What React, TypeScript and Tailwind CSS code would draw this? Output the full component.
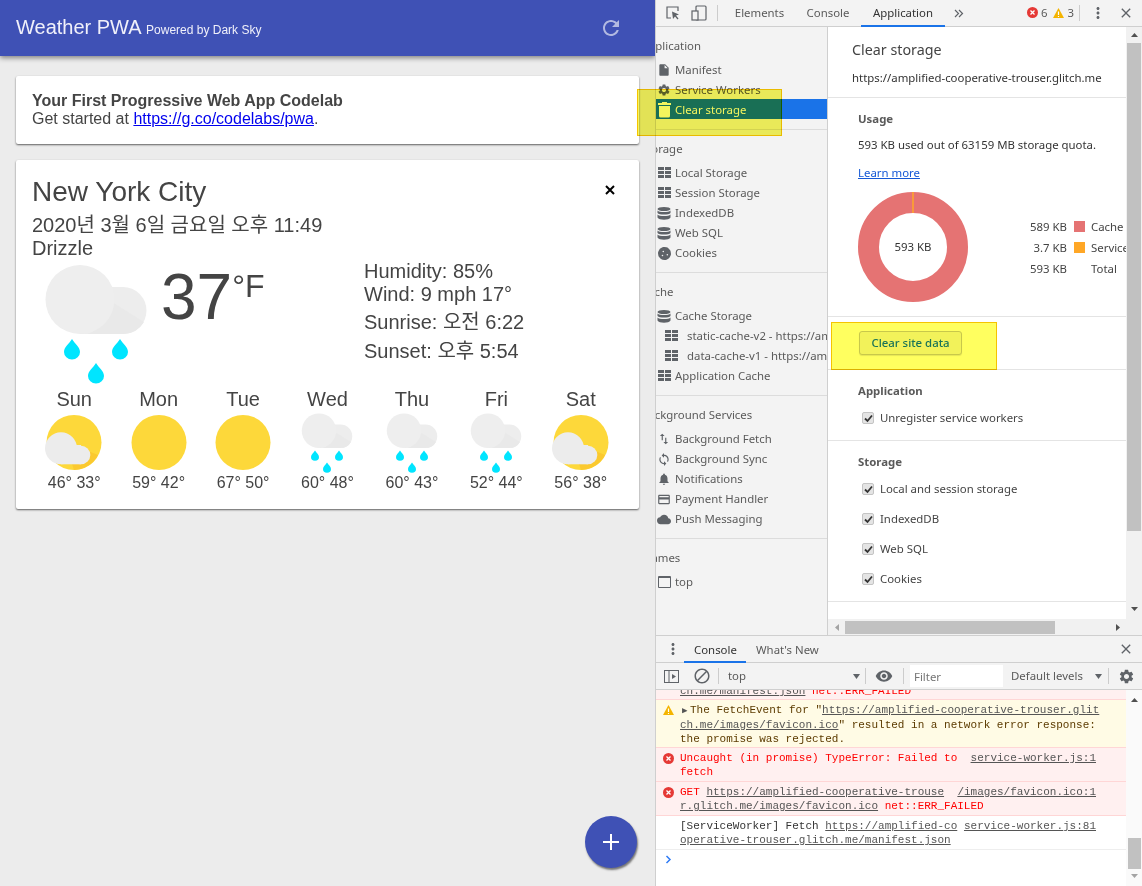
import React from "react";
import {
  MdInsertDriveFile,
  MdSettings,
  MdSwapVert,
  MdSync,
  MdNotifications,
  MdCreditCard,
  MdCloud,
  MdBlock,
  MdVisibility,
  MdMoreVert,
  MdClose,
} from "react-icons/md";
import { FaCookie } from "react-icons/fa";

function Drop({ x, y }: { x: number; y: number }) {
  return (
    <path
      d={`M${x} ${y - 10}C${x + 3} ${y - 5} ${x + 8} ${y - 2} ${x + 8} ${y + 3}A8 7.5 0 0 1 ${x - 8} ${y + 3}C${x - 8} ${y - 2} ${x - 3} ${y - 5} ${x} ${y - 10}Z`}
      fill="#00e5ff"
    />
  );
}

function RainIcon({ size }: { size: number }) {
  const box = size === 128 ? "0 4 128 124" : "0 0 128 128";
  return (
    <svg width={size} height={size === 128 ? 124 : 64} viewBox={box} className="shrink-0">
      <path d="M48 31H91a23.5 23.5 0 0 1 0 47H48Z" fill="#ededed" />
      <path d="M72 41L112 66a23.5 23.5 0 0 1-21 12H56C70 72 78 58 72 41Z" fill="#e9e9e9" />
      <circle cx="48" cy="43.500" r="34.500" fill="#eeeeee" />
      <Drop x={40} y={93} />
      <Drop x={88} y={93} />
      <Drop x={64} y={117} />
    </svg>
  );
}

function SunIcon({ cloud }: { cloud?: boolean }) {
  return (
    <svg width="64" height="64" viewBox="0 0 64 64" className="shrink-0">
      <circle cx="32" cy="33.500" r="27.500" fill="#fdd83a" />
      {cloud && (
        <>
          <path d="M30 55L46 42L56 46A27.500 27.500 0 0 1 32 61Z" fill="#fbc92f" />
          <circle cx="19" cy="39.300" r="16" fill="#ececec" />
          <circle cx="39" cy="46" r="9.300" fill="#ececec" />
          <path d="M19 36H39V55.300H19Z" fill="#ececec" />
        </>
      )}
    </svg>
  );
}

const forecast = [
  { day: "Sun", icon: "partly", temp: "46° 33°" },
  { day: "Mon", icon: "sun", temp: "59° 42°" },
  { day: "Tue", icon: "sun", temp: "67° 50°" },
  { day: "Wed", icon: "rain", temp: "60° 48°" },
  { day: "Thu", icon: "rain", temp: "60° 43°" },
  { day: "Fri", icon: "rain", temp: "52° 44°" },
  { day: "Sat", icon: "partly", temp: "56° 38°" },
];

function WeatherApp() {
  return (
    <div className="w-[655px] shrink-0 bg-[#ececec] relative overflow-hidden font-['Liberation_Sans','Noto_Sans_CJK_KR',sans-serif] text-[#444]">
      <div className="h-14 bg-[#3f51b5] flex items-center justify-between pl-4 pr-[32px] shadow-[0_2px_5px_rgba(0,0,0,0.45)]">
        <p className="text-[20px] text-[#f0f0fa] leading-none mb-[2px]">
          Weather PWA <span className="text-[12px]">Powered by Dark Sky</span>
        </p>
        <svg width="24" height="24" viewBox="0 0 24 24" fill="#ffffff" fillOpacity="0.6">
          <path d="M17.65 6.35C16.2 4.9 14.21 4 12 4c-4.42 0-7.99 3.58-7.99 8s3.57 8 7.99 8c3.73 0 6.84-2.55 7.73-6h-2.08c-.82 2.33-3.04 4-5.65 4-3.31 0-6-2.69-6-6s2.69-6 6-6c1.66 0 3.14.69 4.22 1.78L13 11h7V4l-2.35 2.35z" />
        </svg>
      </div>

      <div className="ml-4 mr-4 mt-5 bg-white rounded-[2px] p-4 h-[68px] text-[16px] leading-[18px] shadow-[0_1px_2px_rgba(0,0,0,0.6)]">
        <p className="font-bold">Your First Progressive Web App Codelab</p>
        <p>
          Get started at <a className="text-[#0000ee] underline">https://g.co/codelabs/pwa</a>.
        </p>
      </div>

      <div className="ml-4 mr-4 mt-4 bg-white rounded-[2px] px-4 pt-4 pb-[17px] shadow-[0_1px_2px_rgba(0,0,0,0.6)]">
        <div className="flex justify-between h-[31px]">
          <p className="text-[28px] leading-[31px]">New York City</p>
          <svg width="18" height="18" viewBox="0 0 18 18" className="mt-[5px] mr-[4px]" stroke="#000" strokeWidth="2">
            <path d="M5 5l8 8M13 5l-8 8" />
          </svg>
        </div>
        <p className="text-[20px] leading-[29px] mt-[4px]">2020년 3월 6일 금요일 오후 11:49</p>
        <p className="text-[20px] leading-[21px] -mt-[2px] mb-[1px]">Drizzle</p>
        <div className="flex h-[128px]">
          <RainIcon size={128} />
          <div className="flex w-[203px] items-start ml-[1px]">
            <span className="text-[64px] leading-[74px]">37</span>
            <span className="text-[32px] leading-[37px] mt-2">°F</span>
          </div>
          <div className="text-[20px]">
            <p className="leading-[23px]">Humidity: 85%</p>
            <p className="leading-[23px]">Wind: 9 mph 17°</p>
            <p className="leading-[29px] mt-[2px]">Sunrise: 오전 6:22</p>
            <p className="leading-[29px]">Sunset: 오후 5:54</p>
          </div>
        </div>
        <div className="grid grid-cols-7">
          {forecast.map((f) => (
            <div key={f.day} className="flex flex-col items-center">
              <p className="text-[20px] h-[21px] leading-[23px]">{f.day}</p>
              {f.icon === "rain" ? <RainIcon size={64} /> : <SunIcon cloud={f.icon === "partly"} />}
              <p className="text-[16px] leading-[18px] mt-[1px]">{f.temp}</p>
            </div>
          ))}
        </div>
      </div>

      <div className="absolute left-[585px] top-[816px] w-[52px] h-[52px] rounded-full bg-[#3f51b5] flex items-center justify-center shadow-[1px_2px_2px_rgba(0,0,0,0.5)]">
        <svg width="18" height="18" viewBox="0 0 18 18" stroke="#fff" strokeWidth="2">
          <path d="M9 1v16M1 9h16" />
        </svg>
      </div>
    </div>
  );
}

function GridIcon() {
  return (
    <svg width="13" height="12" viewBox="0 0 13 12" fill="#5f6368" className="shrink-0">
      <path d="M0 0h6v3H0zM7 0h6v3H7zM0 4h6v3H0zM7 4h6v3H7zM0 8h6v3H0zM7 8h6v3H7z" />
    </svg>
  );
}

function DbIcon() {
  return (
    <svg width="14" height="13" viewBox="0 0 14 13" fill="#5f6368" className="shrink-0">
      <ellipse cx="7" cy="2" rx="6.500" ry="2" />
      <path d="M.5 3.500C2 5.500 12 5.500 13.500 3.500V6C12 8 2 8 .5 6ZM.5 7.500C2 9.500 12 9.500 13.500 7.500V10.500C12 13.500 2 13.500 .5 10.500Z" />
    </svg>
  );
}

function TrashIcon() {
  return (
    <svg width="13" height="16" viewBox="0 0 13 16" fill="#fff" className="shrink-0">
      <path d="M4 0h5v1h4v2H0V1h4zM1 4h11v10a1.500 1.500 0 0 1-1.500 1.500h-8A1.500 1.500 0 0 1 1 14z" />
    </svg>
  );
}

function FrameIcon() {
  return <div className="w-[13px] h-[12px] border-[1.5px] border-t-[2.500px] border-[#5f6368] rounded-[1px] shrink-0" />;
}

function SideHead({ children }: { children: React.ReactNode }) {
  return <p className="h-5 leading-5 mb-1 text-[#5a5a5a] whitespace-nowrap">{children}</p>;
}

function SideRow({
  icon,
  label,
  active,
  indent,
  narrow,
}: {
  icon: React.ReactNode;
  label: string;
  active?: boolean;
  indent?: boolean;
  narrow?: boolean;
}) {
  return (
    <div
      className={`h-5 flex items-center whitespace-nowrap ${active ? "bg-[#1a73e8] text-white -mt-[1px] mb-[1px] pt-[1px]" : "text-[#5a5a5a]"}`}
    >
      <span className={`flex justify-center shrink-0 ${indent ? "w-[28px] ml-[16px] mr-[2px]" : "w-[14px] ml-[16px] mr-[4px]"} ${narrow ? "mr-[-2px]" : ""}`}>
        {icon}
      </span>
      <span>{label}</span>
    </div>
  );
}

function SideSection({ last, children }: { last?: boolean; children: React.ReactNode }) {
  return <div className={`pt-[9px] pb-[9px] ${last ? "" : "border-b border-[#dcdcdc]"}`}>{children}</div>;
}

function Sidebar() {
  const gray = "#5f6368";
  return (
    <div className="w-[172px] shrink-0 bg-[#f3f3f3] border-r border-[#cfcfcf] overflow-hidden">
      <div className="ml-[-15px] w-[186px]">
        <SideSection>
          <SideHead>Application</SideHead>
          <SideRow icon={<MdInsertDriveFile size={18} color={gray} />} label="Manifest" />
          <SideRow icon={<MdSettings size={16} color={gray} />} label="Service Workers" />
          <SideRow icon={<TrashIcon />} label="Clear storage" active />
        </SideSection>
        <SideSection>
          <SideHead>Storage</SideHead>
          <SideRow icon={<GridIcon />} label="Local Storage" />
          <SideRow icon={<GridIcon />} label="Session Storage" />
          <SideRow icon={<DbIcon />} label="IndexedDB" />
          <SideRow icon={<DbIcon />} label="Web SQL" />
          <SideRow icon={<FaCookie size={13} color={gray} />} label="Cookies" />
        </SideSection>
        <SideSection>
          <SideHead>Cache</SideHead>
          <SideRow icon={<DbIcon />} label="Cache Storage" />
          <SideRow icon={<GridIcon />} label="static-cache-v2 - https://amplified" indent />
          <SideRow icon={<GridIcon />} label="data-cache-v1 - https://amplified" indent />
          <SideRow icon={<GridIcon />} label="Application Cache" />
        </SideSection>
        <SideSection>
          <SideHead>Background Services</SideHead>
          <SideRow icon={<MdSwapVert size={18} color={gray} />} label="Background Fetch" />
          <SideRow icon={<MdSync size={17} color={gray} />} label="Background Sync" />
          <SideRow icon={<MdNotifications size={18} color={gray} />} label="Notifications" />
          <SideRow icon={<MdCreditCard size={17} color={gray} />} label="Payment Handler" />
          <SideRow icon={<MdCloud size={17} color={gray} />} label="Push Messaging" />
        </SideSection>
        <SideSection last>
          <SideHead>Frames</SideHead>
          <SideRow icon={<FrameIcon />} label="top" narrow />
        </SideSection>
      </div>
    </div>
  );
}

function Check({ label }: { label: string }) {
  return (
    <div className="h-5 flex items-center ml-[4px] text-[#444]">
      <span className="w-[12px] h-[12px] bg-[#e4e4e4] border border-[#c4c4c4] rounded-[2px] flex items-center justify-center mr-[6px]">
        <svg width="9" height="9" viewBox="0 0 9 9" fill="none" stroke="#333" strokeWidth="1.800">
          <path d="M1 4.500l2.500 2.500L8 1.500" />
        </svg>
      </span>
      {label}
    </div>
  );
}

function ArrowUp() {
  return (
    <svg width="7" height="4" viewBox="0 0 7 4" fill="#505050">
      <path d="M3.500 0L7 4H0Z" />
    </svg>
  );
}

function ArrowDown() {
  return (
    <svg width="7" height="4" viewBox="0 0 7 4" fill="#505050">
      <path d="M0 0H7L3.500 4Z" />
    </svg>
  );
}

function ClearStorage() {
  return (
    <div className="w-[314px] shrink-0 flex">
      <div className="w-[298px] shrink-0 flex flex-col bg-white">
        <div className="flex-1 overflow-hidden">
          <div className="pl-[24px] pt-[13px] pb-[10px] h-[71px] border-b border-[#e4e4e4] text-[#333]">
            <p className="h-5 leading-[19px] text-[14.3px] text-[#444]">Clear storage</p>
            <p className="h-5 leading-[21px] mt-[7px] whitespace-nowrap">https://amplified-cooperative-trouser.glitch.me</p>
          </div>
          <div className="pl-[30px] h-[219px] pt-[10px] border-b border-[#e4e4e4] text-[#333]">
            <p className="h-5 leading-[21px] font-bold text-[#5a5a5a]">Usage</p>
            <p className="h-5 leading-[21px] mt-[6px] whitespace-nowrap">593 KB used out of 63159 MB storage quota.</p>
            <a className="block h-5 leading-5 mt-[9px] text-[#1558d6] underline">Learn more</a>
            <div className="flex mt-[9px]">
              <div className="relative w-[110px] h-[110px] shrink-0">
                <svg width="110" height="110" viewBox="0 0 110 110">
                  <circle cx="55" cy="55" r="44.500" fill="none" stroke="#e57373" strokeWidth="21" />
                  <path d="M55 0V21" stroke="#ffa726" strokeWidth="1.500" />
                </svg>
                <span className="absolute inset-0 flex items-center justify-center text-[#333]">593 KB</span>
              </div>
              <div className="ml-[59px] mt-[24px] overflow-hidden">
                {[
                  { size: "589 KB", swatch: "bg-[#e57373]", label: "Cache" },
                  { size: "3.7 KB", swatch: "bg-[#ffa726]", label: "Service Workers" },
                  { size: "593 KB", swatch: "", label: "Total" },
                ].map((r) => (
                  <div key={r.size + r.label} className="h-[21px] flex items-center whitespace-nowrap text-[#444]">
                    <span className="w-[40px] text-right shrink-0">{r.size}</span>
                    <span className={`w-[11px] h-[11px] ml-[7px] mr-[6px] shrink-0 ${r.swatch}`} />
                    <span>{r.label}</span>
                  </div>
                ))}
              </div>
            </div>
          </div>
          <div className="pl-[31px] pt-[14px] h-[53px] border-b border-[#e4e4e4]">
            <button className="w-[103px] h-[24px] rounded-[3px] bg-[#f2f2f2] border border-[#c8c8c8] shadow-[0_1px_1px_rgba(0,0,0,0.1)] text-[#1a73e8] font-medium leading-none">
              Clear site data
            </button>
          </div>
          <div className="pl-[30px] pt-[11px] h-[71px] border-b border-[#e4e4e4]">
            <p className="h-5 leading-5 font-bold text-[#5a5a5a] mb-[7px]">Application</p>
            <Check label="Unregister service workers" />
          </div>
          <div className="pl-[30px] pt-[11px] h-[161px] border-b border-[#e4e4e4]">
            <p className="h-5 leading-5 font-bold text-[#5a5a5a] mb-[7px]">Storage</p>
            <div className="flex flex-col gap-[10px]">
              <Check label="Local and session storage" />
              <Check label="IndexedDB" />
              <Check label="Web SQL" />
              <Check label="Cookies" />
            </div>
          </div>
        </div>
        <div className="h-[16px] shrink-0 bg-[#f1f1f1] flex items-center">
          <span className="w-[17px] flex justify-center">
            <svg width="4" height="7" viewBox="0 0 4 7" fill="#a3a3a3">
              <path d="M4 0V7L0 3.500Z" />
            </svg>
          </span>
          <div className="w-[210px] h-[13px] bg-[#c1c1c1]" />
          <span className="ml-auto w-[17px] flex justify-center">
            <svg width="4" height="7" viewBox="0 0 4 7" fill="#505050">
              <path d="M0 0V7L4 3.500Z" />
            </svg>
          </span>
        </div>
      </div>
      <div className="w-[16px] shrink-0 bg-[#f1f1f1] flex flex-col items-center">
        <div className="h-4 flex items-center">
          <ArrowUp />
        </div>
        <div className="w-[14px] h-[488px] bg-[#c1c1c1] shrink-0" />
        <div className="h-[104px] pt-[76px]">
          <ArrowDown />
        </div>
      </div>
    </div>
  );
}

function ErrIcon() {
  return (
    <svg width="11" height="11" viewBox="0 0 11 11" className="shrink-0">
      <circle cx="5.500" cy="5.500" r="5.500" fill="#e53935" />
      <path d="M3.500 3.500l4 4M7.500 3.500l-4 4" stroke="#fff" strokeWidth="1.300" />
    </svg>
  );
}

function WarnIcon() {
  return (
    <svg width="11" height="10" viewBox="0 0 11 10" className="shrink-0">
      <path d="M5.500 0L11 10H0Z" fill="#f4b400" />
      <path d="M5.500 3.500V7M5.500 8v1" stroke="#fff" strokeWidth="1.200" />
    </svg>
  );
}

function TopBar() {
  return (
    <div className="h-[27px] shrink-0 bg-[#f3f3f3] border-b border-[#cfcfcf] flex items-center text-[#5a5a5a]">
      <svg width="16" height="16" viewBox="0 0 16 16" fill="none" className="ml-[9px]">
        <path d="M6 13H2V2h11v4" stroke="#5f6368" strokeWidth="1.200" />
        <path d="M7 6.500l7 3-3 1 2.500 3-1 1-2.500-3-2 2.500Z" fill="#5f6368" />
      </svg>
      <svg width="16" height="16" viewBox="0 0 16 16" fill="none" stroke="#5f6368" strokeWidth="1.200" className="ml-[10px]">
        <rect x="5" y="1" width="10" height="14" rx="1" />
        <rect x="1" y="6" width="6" height="9" fill="#f3f3f3" />
      </svg>
      <div className="w-px h-4 bg-[#ccc] ml-[10px]" />
      <div className="flex h-full ml-[6px]">
        <span className="w-[71px] text-center leading-[26px]">Elements</span>
        <span className="w-[66px] text-center leading-[26px]">Console</span>
        <span className="w-[84px] text-center leading-[26px] text-[#333] border-b-2 border-[#1a73e8] h-[27px]">Application</span>
      </div>
      <svg width="10" height="9" viewBox="0 0 10 9" fill="none" stroke="#5f6368" strokeWidth="1.200" className="ml-[9px]">
        <path d="M1 1l3.500 3.500L1 8M5 1l3.500 3.500L5 8" />
      </svg>
      <div className="ml-auto flex items-center gap-[3px]">
        <ErrIcon />
        <span>6</span>
        <span className="ml-[3px]">
          <WarnIcon />
        </span>
        <span>3</span>
      </div>
      <div className="w-px h-4 bg-[#ccc] ml-[5px]" />
      <MdMoreVert size={18} color="#5f6368" className="ml-[9px]" />
      <MdClose size={16} color="#5f6368" className="ml-[11px] mr-[8px]" />
    </div>
  );
}

function Src({ children }: { children: React.ReactNode }) {
  return <span className="absolute right-[30px] top-[3px] underline text-[#555] bg-inherit pl-[3px]">{children}</span>;
}

function Console() {
  return (
    <div className="flex-1 flex flex-col min-h-0 border-t border-[#cfcfcf]">
      <div className="h-[27px] shrink-0 bg-[#f3f3f3] border-b border-[#cfcfcf] flex items-center text-[#5a5a5a]">
        <MdMoreVert size={18} color="#5f6368" className="ml-[8px]" />
        <span className="ml-[2px] px-[10px] h-[27px] leading-[28px] w-[62px] text-[#333] border-b-2 border-[#1a73e8]">Console</span>
        <span className="ml-[10px] pt-[1px]">What's New</span>
        <MdClose size={16} color="#5f6368" className="ml-auto mr-[8px]" />
      </div>
      <div className="h-[27px] shrink-0 bg-[#f3f3f3] border-b border-[#cfcfcf] flex items-center text-[#5a5a5a]">
        <svg width="15" height="13" viewBox="0 0 15 13" fill="none" className="ml-[8px]">
          <rect x=".5" y=".5" width="14" height="12" stroke="#5f6368" />
          <path d="M5 1v11" stroke="#5f6368" />
          <path d="M8 4l4 2.500L8 9Z" fill="#5f6368" />
        </svg>
        <MdBlock size={18} color="#5f6368" className="ml-[14px]" />
        <div className="w-px h-4 bg-[#ccc] ml-[7px]" />
        <span className="ml-[9px] w-[125px]">top</span>
        <svg width="7" height="5" viewBox="0 0 7 5" fill="#5f6368">
          <path d="M0 0H7L3.500 5Z" />
        </svg>
        <div className="w-px h-4 bg-[#ccc] ml-[5px]" />
        <MdVisibility size={18} color="#5f6368" className="ml-[9px]" />
        <div className="w-px h-4 bg-[#ccc] ml-[10px]" />
        <div className="w-[93px] h-[22px] bg-white ml-[6px] pl-[4px] leading-[23px] text-[#757575]">Filter</div>
        <span className="ml-[8px] w-[71px] whitespace-nowrap">Default levels</span>
        <svg width="7" height="5" viewBox="0 0 7 5" fill="#5f6368" className="ml-[13px]">
          <path d="M0 0H7L3.500 5Z" />
        </svg>
        <div className="w-px h-4 bg-[#ccc] ml-[6px]" />
        <MdSettings size={17} color="#5f6368" className="ml-[9px]" />
      </div>
      <div className="flex-1 flex min-h-0 bg-white font-['Liberation_Mono',monospace] text-[11px] leading-[14px]">
        <div className="w-[470px] shrink-0 overflow-hidden">
          <div className="h-[10px] overflow-hidden bg-[#fff0f0] border-b border-[#ffd6d6] pl-[24px]">
            <p className="-mt-[6px] whitespace-pre">
              <span className="underline text-[#555]">ch.me/manifest.json</span>
              <span className="text-[#f00]"> net::ERR_FAILED</span>
            </p>
          </div>
          <div className="relative h-[48px] bg-[#fffbe5] border-b border-[#ffd6d6] pl-[24px] pt-[3px] text-[#5c3b00] whitespace-pre">
            <span className="absolute left-[7px] top-[5px]">
              <WarnIcon />
            </span>
            <p>
              <span className="inline-block w-[10px] pl-[2px] text-[#555] text-[9px]">▶</span>The FetchEvent for "<span className="underline text-[#555]">https://amplified-cooperative-trouser.glit</span>
            </p>
            <p>
              <span className="underline text-[#555]">ch.me/images/favicon.ico</span>" resulted in a network error response:
            </p>
            <p>the promise was rejected.</p>
          </div>
          <div className="relative h-[34px] bg-[#fff0f0] border-b border-[#ffd6d6] pl-[24px] pt-[3px] text-[#f00] whitespace-pre">
            <span className="absolute left-[7px] top-[5px]">
              <ErrIcon />
            </span>
            <p>Uncaught (in promise) TypeError: Failed to</p>
            <p>fetch</p>
            <Src>service-worker.js:1</Src>
          </div>
          <div className="relative h-[34px] bg-[#fff0f0] border-b border-[#ffd6d6] pl-[24px] pt-[3px] text-[#f00] whitespace-pre">
            <span className="absolute left-[7px] top-[5px]">
              <ErrIcon />
            </span>
            <p>
              GET <span className="underline text-[#555]">https://amplified-cooperative-trouse</span>
            </p>
            <p>
              <span className="underline text-[#555]">r.glitch.me/images/favicon.ico</span> net::ERR_FAILED
            </p>
            <Src>/images/favicon.ico:1</Src>
          </div>
          <div className="relative h-[34px] border-b border-[#eee] pl-[24px] pt-[3px] text-[#333] whitespace-pre">
            <p>
              [ServiceWorker] Fetch <span className="underline text-[#555]">https://amplified-co</span>
            </p>
            <p>
              <span className="underline text-[#555]">operative-trouser.glitch.me/manifest.json</span>
            </p>
            <Src>service-worker.js:81</Src>
          </div>
          <svg width="7" height="9" viewBox="0 0 7 9" fill="none" stroke="#2f7cf6" strokeWidth="1.500" className="ml-[9px] mt-[5px]">
            <path d="M1.500 1l3.500 3.500L1.500 8" />
          </svg>
        </div>
        <div className="w-[16px] shrink-0 bg-[#fafafa] flex flex-col items-center">
          <div className="h-[16px] flex items-center mt-[2px]">
            <ArrowUp />
          </div>
          <div className="w-[13px] h-[31px] bg-[#c1c1c1] mt-[130px] shrink-0" />
          <div className="mt-[5px] opacity-50">
            <ArrowDown />
          </div>
        </div>
      </div>
    </div>
  );
}

export default function App() {
  return (
    <div className="relative w-[1142px] h-[886px] flex overflow-hidden bg-white">
      <WeatherApp />
      <div className="flex-1 flex flex-col border-l border-[#cfcfcf] font-['Noto_Sans',sans-serif] text-[11.4px] min-w-0">
        <TopBar />
        <div className="h-[608px] shrink-0 flex">
          <Sidebar />
          <ClearStorage />
        </div>
        <Console />
      </div>

      <div className="absolute left-[637px] top-[89px] w-[145px] h-[47px] bg-[#f5f55d] border border-[#f5c400] mix-blend-multiply" />
      <div className="absolute left-[831px] top-[322px] w-[166px] h-[48px] bg-[#ffff5f] border border-[#f5c400] mix-blend-multiply" />
    </div>
  );
}
